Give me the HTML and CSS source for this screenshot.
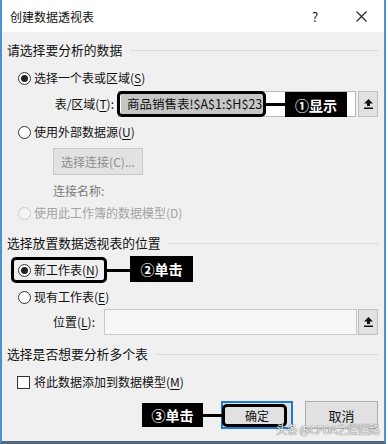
FILE: index.html
```html
<!DOCTYPE html>
<html lang="zh-CN">
<head>
  <meta charset="UTF-8">
  <meta name="viewport" content="width=device-width, initial-scale=1.0">
  <title>创建数据透视表</title>
  <link rel="stylesheet" href="styles.css">
</head>
<body>
  <div class="dialog">
    <!-- Title bar -->
    <div class="titlebar">
      <span class="title">创建数据透视表</span>
      <span class="help">?</span>
      <span class="close">
        <svg width="11" height="11" viewBox="0 0 11 11"><path d="M0.5 0.5 L10.5 10.5 M10.5 0.5 L0.5 10.5" stroke="#222" stroke-width="1.1" fill="none"/></svg>
      </span>
    </div>

    <div class="content">
      <!-- Source data -->
      <div class="group-head g1">请选择要分析的数据</div>
      <div class="radio-row r1"><span class="radio checked"></span>选择一个表或区域(<u>S</u>)</div>
      <div class="field-row range-row">
        <span class="field-label">表/区域(<u>T</u>):</span>
        <div class="field range-field"><span class="selected">商品销售表!$A$1:$H$23</span></div>
        <span class="collapse">
          <svg width="9" height="10" viewBox="0 0 9 10"><path d="M4.5 0 L9 4.5 L6 4.5 L6 7 L3 7 L3 4.5 L0 4.5 Z" fill="#111"/><rect x="0" y="8.5" width="9" height="1.5" fill="#111"/></svg>
        </span>
      </div>
      <div class="radio-row r2"><span class="radio"></span>使用外部数据源(<u>U</u>)</div>
      <button class="btn conn-btn" disabled>选择连接(C)...</button>
      <div class="conn-name">连接名称:</div>
      <div class="radio-row r3 disabled"><span class="radio"></span>使用此工作簿的数据模型(D)</div>

      <!-- Placement -->
      <div class="group-head g2">选择放置数据透视表的位置</div>
      <div class="radio-row r4"><span class="radio checked"></span>新工作表(<u>N</u>)</div>
      <div class="radio-row r5"><span class="radio"></span>现有工作表(<u>E</u>)</div>
      <div class="field-row place-row">
        <span class="field-label">位置(<u>L</u>):</span>
        <div class="field place-field"></div>
        <span class="collapse">
          <svg width="9" height="10" viewBox="0 0 9 10"><path d="M4.5 0 L9 4.5 L6 4.5 L6 7 L3 7 L3 4.5 L0 4.5 Z" fill="#111"/><rect x="0" y="8.5" width="9" height="1.5" fill="#111"/></svg>
        </span>
      </div>

      <!-- Multiple tables -->
      <div class="group-head g3">选择是否想要分析多个表</div>
      <div class="check-row"><span class="checkbox"></span>将此数据添加到数据模型(<u>M</u>)</div>

      <div class="actions">
        <button class="btn ok-btn">确定</button>
        <button class="btn cancel-btn">取消</button>
      </div>
    </div>

    <!-- Annotations over the dialog -->
    <div class="mark mark-range"></div>
    <div class="link link1"></div>
    <div class="tag tag1">①显示</div>

    <div class="mark mark-new"></div>
    <div class="link link2"></div>
    <div class="tag tag2">②单击</div>

    <div class="tag tag3">③单击</div>
    <div class="link link3"></div>
    <div class="mark mark-ok"></div>

    <div class="watermark">头条 @CPDA之慢慢路</div>
  </div>
</body>
</html>
```

FILE: styles.css
```css
* {
  box-sizing: border-box;
}
body {
  margin: 0;
  width: 388px;
  height: 444px;
  background: #ffffff;
  font-family: "Noto Sans CJK SC", "Microsoft YaHei", sans-serif;
  font-size: 12px;
  color: #111;
  overflow: hidden;
}
u {
  text-decoration: underline;
  text-underline-offset: 2px;
}
.dialog {
  position: relative;
  width: 386px;
  height: 444px;
  border-left: 2px solid #4a90d4;
  border-right: 2px solid #4a90d4;
  border-bottom: 3px solid #51677d;
  background: #f0f0f0;
  display: flex;
  flex-direction: column;
}
.titlebar {
  height: 32px;
  background: #ffffff;
  display: flex;
  align-items: center;
  padding-left: 8px;
}
.title {
  flex: 1;
  font-size: 12px;
}
.help {
  width: 20px;
  font-size: 13px;
  margin-right: 24px;
}
.close {
  width: 28px;
  display: flex;
  align-items: center;
}
.content {
  flex: 1;
  display: flex;
  flex-direction: column;
  padding: 0 6px 0 5px;
  line-height: 20px;
}
.group-head {
  display: flex;
  align-items: center;
  height: 20px;
  font-size: 12.8px;
}
.group-head::after {
  content: "";
  flex: 1;
  height: 1px;
  background: #dcdcdc;
  margin-left: 8px;
}
.g1 { margin-top: 8px; }
.g2 { margin-top: 10px; }
.g3 { margin-top: 9px; }

.radio-row {
  display: flex;
  align-items: center;
  height: 20px;
  padding-left: 11px;
}
.radio {
  width: 13px;
  height: 13px;
  border: 1px solid #333;
  border-radius: 50%;
  background: #fff;
  margin-right: 3px;
  display: flex;
  align-items: center;
  justify-content: center;
}
.radio.checked::after {
  content: "";
  width: 7px;
  height: 7px;
  border-radius: 50%;
  background: #222;
}
.radio-row.disabled {
  color: #a3a3a3;
}
.radio-row.disabled .radio {
  border-color: #cccccc;
  background: #f4f4f4;
}
.r1 { margin-top: 8px; }
.r2 { margin-top: 5px; }
.r3 { margin-top: 2px; }
.r4 { margin-top: 4px; height: 26px; }
.r5 { margin-top: 4px; }

.field-row {
  display: flex;
  align-items: center;
  height: 26px;
}
.range-row {
  margin-top: 3px;
}
.place-row {
  margin-top: 2px;
  padding-left: 46px;
}
.field-label {
  flex: none;
}
.range-row .field-label {
  width: 107px;
  text-align: right;
  margin-right: 4px;
}
.place-row .field-label {
  width: 51px;
}
.field {
  height: 26px;
  border: 1px solid #b9b9b9;
  background: #ffffff;
  display: flex;
  align-items: center;
}
.range-field {
  width: 238px;
  padding-left: 2px;
}
.place-field {
  width: 253px;
  margin-right: 1px;
  background: #f7f7f7;
  border-color: #c8c8c8;
}
.selected {
  background: #c6c6c6;
  padding: 0 4px 0 6px;
  height: 20px;
  line-height: 20px;
  font-size: 12.5px;
}
.collapse {
  width: 20px;
  height: 26px;
  margin-left: 2px;
  background: #e1e1e1;
  border: 1px solid #c0c0c0;
  display: flex;
  align-items: center;
  justify-content: center;
}
.place-row .collapse {
  margin-left: 0;
}

.btn {
  font-family: inherit;
  font-size: 12px;
  background: #e1e1e1;
  border: 1px solid #adadad;
  color: #111;
  padding: 0;
}
.conn-btn {
  width: 90px;
  height: 27px;
  margin: 6px 0 0 46px;
  color: #8f8f8f;
  border-color: #c9c9c9;
  background: #e2e2e2;
}
.conn-name {
  margin: 6px 0 0 46px;
  height: 20px;
  color: #7a7a7a;
}

.check-row {
  display: flex;
  align-items: center;
  height: 20px;
  margin-top: 8px;
  padding-left: 10px;
}
.checkbox {
  width: 13px;
  height: 13px;
  border: 1px solid #333;
  background: #fff;
  margin-right: 4px;
}

.actions {
  display: flex;
  justify-content: flex-end;
  gap: 12px;
  margin-top: 9px;
}
.ok-btn {
  width: 72px;
  height: 28px;
  border: 2px solid #1a7ad6;
}
.cancel-btn {
  width: 73px;
  height: 28px;
  font-size: 13px;
}

/* annotations */
.mark {
  position: absolute;
  border: 3px solid #000;
  border-radius: 5px;
}
.mark-range {
  left: 115px;
  top: 91px;
  width: 149px;
  height: 26px;
}
.mark-new {
  left: 9px;
  top: 257px;
  width: 96px;
  height: 26px;
}
.mark-ok {
  left: 220px;
  top: 404px;
  width: 65px;
  height: 23px;
}
.link {
  position: absolute;
  height: 3px;
  background: #000;
}
.link1 { left: 264px; top: 103px; width: 20px; }
.link2 { left: 105px; top: 269px; width: 24px; }
.link3 { left: 201px; top: 414px; width: 20px; }
.tag {
  position: absolute;
  background: #000;
  color: #fff;
  font-size: 14px;
  font-weight: bold;
  display: flex;
  align-items: center;
  justify-content: center;
  line-height: 1;
}
.tag1 { left: 283px; top: 92px; width: 62px; height: 25px; }
.tag2 { left: 128px; top: 256px; width: 63px; height: 26px; }
.tag3 { left: 140px; top: 403px; width: 61px; height: 24px; }
.watermark {
  position: absolute;
  left: 274px;
  top: 422px;
  font-size: 11px;
  line-height: 14px;
  letter-spacing: -0.3px;
  color: #f2f2f2;
  text-shadow: 0 0 1px #6a6a6a, 0 0 1px #6a6a6a;
  white-space: nowrap;
}
```
